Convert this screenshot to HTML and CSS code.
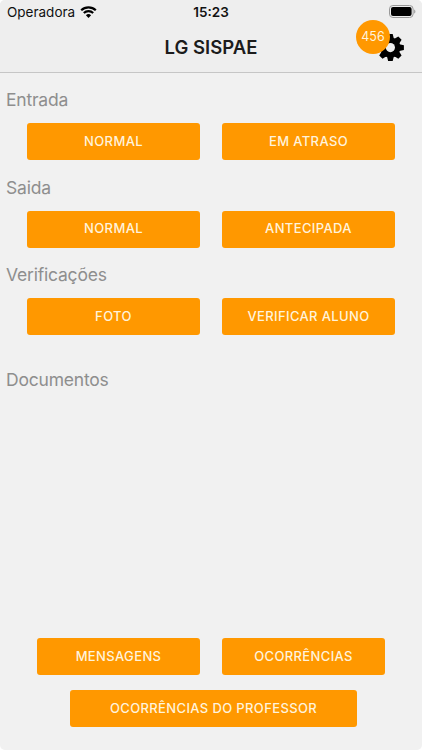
FILE: index.html
```html
<!DOCTYPE html>
<html lang="pt-BR">
<head>
    <meta charset="UTF-8">
    <meta name="viewport" content="width=device-width, initial-scale=1.0">
    <title>LG SISPAE</title>
    <link rel="stylesheet" href="styles.css">
</head>
<body>
    <div class="screen">
        <header class="header">
            <div class="status-bar">
                <div class="carrier">
                    <span>Operadora</span>
                    <svg class="wifi" viewBox="0 0 17 12" width="17" height="12">
                        <path d="M1.2 4.3a10.4 10.4 0 0 1 14.6 0" fill="none" stroke="#000" stroke-width="2.2"/>
                        <path d="M3.8 7.1a6.7 6.7 0 0 1 9.4 0" fill="none" stroke="#000" stroke-width="2.1"/>
                        <path d="M8.5 12L5.9 9.3a3.7 3.7 0 0 1 5.2 0z"/>
                    </svg>
                </div>
                <div class="time">15:23</div>
                <svg class="battery" viewBox="0 0 27 13" width="27" height="13">
                    <rect x="0.5" y="0.5" width="23.6" height="12" rx="3.4" fill="none" stroke="#999"/>
                    <rect x="2" y="2" width="20.6" height="9" rx="2"/>
                    <path d="M25.2 4.4c1.6.6 1.6 3.6 0 4.2z" fill="#999"/>
                </svg>
            </div>
            <div class="title-bar">
                <h1>LG SISPAE</h1>
                <div class="settings">
                    <svg class="gear" viewBox="-13.4 -13.6 28 28" width="28" height="28">
                        <path d="M-3.4-9L-2.3-13.5H2.3L3.4-9V9L2.3 13.5H-2.3L-3.4 9z"/>
                        <path transform="rotate(45)" d="M-3.4-9L-2.3-13.5H2.3L3.4-9V9L2.3 13.5H-2.3L-3.4 9z"/>
                        <path transform="rotate(90)" d="M-3.4-9L-2.3-13.5H2.3L3.4-9V9L2.3 13.5H-2.3L-3.4 9z"/>
                        <path transform="rotate(135)" d="M-3.4-9L-2.3-13.5H2.3L3.4-9V9L2.3 13.5H-2.3L-3.4 9z"/>
                        <circle r="10"/>
                        <circle r="4.6" fill="#eeeeee"/>
                    </svg>
                    <span class="badge">456</span>
                </div>
            </div>
        </header>

        <main class="content">
            <section class="group">
                <h2>Entrada</h2>
                <div class="buttons">
                    <button>NORMAL</button>
                    <button>EM ATRASO</button>
                </div>
            </section>
            <section class="group">
                <h2>Saida</h2>
                <div class="buttons">
                    <button>NORMAL</button>
                    <button>ANTECIPADA</button>
                </div>
            </section>
            <section class="group">
                <h2>Verificações</h2>
                <div class="buttons">
                    <button>FOTO</button>
                    <button>VERIFICAR ALUNO</button>
                </div>
            </section>
            <section class="group documents">
                <h2>Documentos</h2>
            </section>
        </main>

        <footer class="footer">
            <div class="buttons">
                <button>MENSAGENS</button>
                <button>OCORRÊNCIAS</button>
            </div>
            <button class="wide">OCORRÊNCIAS DO PROFESSOR</button>
        </footer>
    </div>
</body>
</html>
```
FILE: styles.css
```css
* {
    box-sizing: border-box;
}

body {
    margin: 0;
    background: #ffffff;
    font-family: Inter, "Liberation Sans", sans-serif;
}

.screen {
    display: flex;
    flex-direction: column;
    height: 750px;
    background: #f1f1f1;
    border-radius: 5px;
    overflow: hidden;
}

.header {
    height: 73px;
    background: #eeeeee;
    border-bottom: 1px solid #c6c6c6;
}

.status-bar {
    display: grid;
    grid-template-columns: 1fr auto 1fr;
    align-items: center;
    height: 24px;
    padding: 0 7px 0 7px;
    color: #111111;
}

.carrier {
    display: flex;
    align-items: center;
    gap: 5px;
    font-size: 13.5px;
}

.time {
    font-size: 13.5px;
    font-weight: 600;
}

.battery {
    justify-self: end;
    margin: -2px -1px 0 0;
}

.title-bar {
    display: grid;
    grid-template-columns: 1fr auto 1fr;
    align-items: center;
    height: 47px;
}

.title-bar h1 {
    grid-column: 2;
    margin: 0 0 2px;
    font-size: 18.5px;
    font-weight: 600;
    color: #1c1c1c;
}

.settings {
    position: relative;
    justify-self: end;
    width: 28px;
    height: 28px;
    margin-right: 17px;
}

.gear {
    display: block;
}

.badge {
    position: absolute;
    top: -14px;
    left: -21px;
    width: 34px;
    height: 34px;
    border-radius: 50%;
    background: #ff9800;
    color: #fff3dc;
    font-size: 12.5px;
    line-height: 34px;
    letter-spacing: 0.1px;
    text-align: center;
}

.content {
    flex: 1;
    padding-top: 14px;
}

.group {
    height: 87.6px;
}

.group h2 {
    margin: 0 0 11px 6px;
    font-size: 17.5px;
    font-weight: 400;
    line-height: 25px;
    letter-spacing: -0.2px;
    color: #8e8e8e;
}

.documents {
    padding-top: 17px;
}

.buttons {
    display: flex;
    gap: 22px;
    padding: 0 27px;
}

button {
    flex: 1;
    height: 37px;
    padding: 0 0 2px;
    border: none;
    border-radius: 3px;
    background: #ff9800;
    color: #fff3dc;
    font-family: inherit;
    font-size: 13px;
    font-weight: 500;
    letter-spacing: 0.37px;
}

.footer {
    display: flex;
    flex-direction: column;
    gap: 15px;
    padding-bottom: 23px;
}

.footer .buttons {
    padding: 0 37px;
}

.footer .wide {
    flex: none;
    align-self: center;
    width: 287px;
    margin-left: 5px;
}
```
